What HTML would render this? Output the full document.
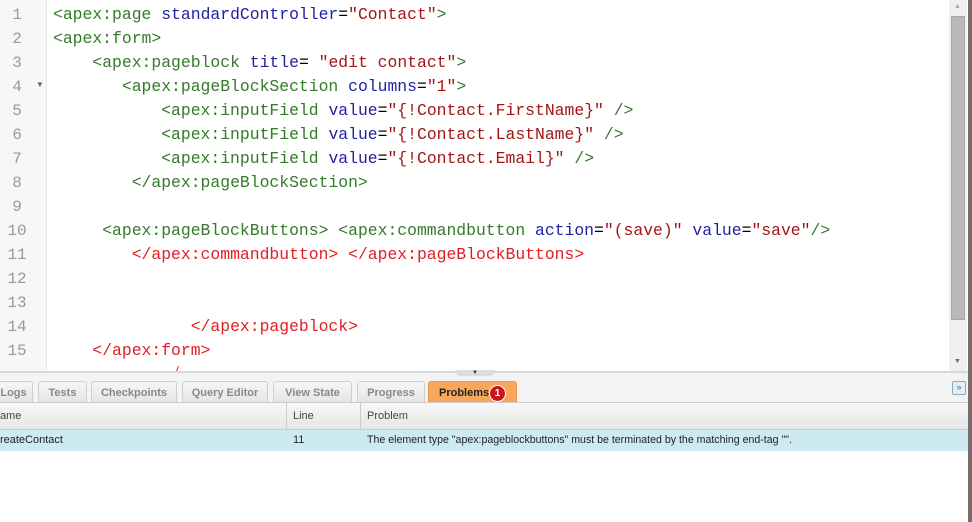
<!DOCTYPE html>
<html><head><meta charset="utf-8"><style>
body{margin:0;width:972px;height:522px;overflow:hidden;background:#fff;position:relative;font-family:"Liberation Sans",sans-serif}
.ed{position:absolute;left:0;top:0;width:968px;height:371px;background:#fff;overflow:hidden}
.gut{position:absolute;left:0;top:0;width:46px;height:371px;background:#f7f7f7;border-right:1px solid #e6e6e6}
.ln{position:absolute;left:0;width:34px;text-align:center;font:16px "Liberation Mono",monospace;color:#999}
.code{position:absolute;left:53px;top:0;font:16.4px "Liberation Mono",monospace;white-space:pre;line-height:24px;color:#000}
.t{color:#347a2a}.a{color:#1f1fa0}.s{color:#a31515}.r{color:#e01e24}
.sb{position:absolute;left:949px;top:0;width:18px;height:371px;background:#f0f0f0}
.thumb{position:absolute;left:2px;top:16px;width:12px;height:302px;background:#b9b9b9;border:1px solid #a8a8a8}
.rb{position:absolute;left:968px;top:0;width:4px;height:522px;background:#7a6c6c}
.tabs{position:absolute;left:0;top:371px;width:968px;height:31px;background:#f3f3f3;border-top:2px solid #d8d8d8;box-sizing:border-box}
.tab{position:absolute;top:8px;height:22px;background:linear-gradient(#f6f6f6,#e4e4e4);border:1px solid #cfcfcf;border-bottom:none;border-radius:3px 3px 0 0;font:bold 11px "Liberation Sans",sans-serif;color:#888;line-height:22px;text-align:center;box-sizing:border-box}
.hd{position:absolute;top:402px;left:0;width:968px;height:28px;background:linear-gradient(#f7f7f7,#e6e6e6);border-top:1px solid #ccc;border-bottom:1px solid #ccc;box-sizing:border-box;font-size:11px;color:#444}
.row{position:absolute;top:430px;left:0;width:968px;height:21px;background:#cdeaf3;font-size:11px;color:#222}
.c{position:absolute;top:0;height:100%;line-height:27px;padding-left:6px;box-sizing:border-box}
.row .c{line-height:21px}
</style></head><body>
<div class="ed">
<div class="gut"></div>
<div class="ln" style="top:6px">1</div><div class="ln" style="top:30px">2</div><div class="ln" style="top:54px">3</div><div class="ln" style="top:78px">4</div><div class="ln" style="top:102px">5</div><div class="ln" style="top:126px">6</div><div class="ln" style="top:150px">7</div><div class="ln" style="top:174px">8</div><div class="ln" style="top:198px">9</div><div class="ln" style="top:222px">10</div><div class="ln" style="top:246px">11</div><div class="ln" style="top:270px">12</div><div class="ln" style="top:294px">13</div><div class="ln" style="top:318px">14</div><div class="ln" style="top:342px">15</div>
<div style="position:absolute;left:36px;top:80px;font-size:8px;color:#666">▼</div>
<div class="code" style="top:3px"><span class="t">&lt;apex:page</span> <span class="a">standardController</span>=<span class="s">"Contact"</span><span class="t">&gt;</span>
<span class="t">&lt;apex:form&gt;</span>
    <span class="t">&lt;apex:pageblock</span> <span class="a">title</span>= <span class="s">"edit contact"</span><span class="t">&gt;</span>
       <span class="t">&lt;apex:pageBlockSection</span> <span class="a">columns</span>=<span class="s">"1"</span><span class="t">&gt;</span>
           <span class="t">&lt;apex:inputField</span> <span class="a">value</span>=<span class="s">"{!Contact.FirstName}"</span> <span class="t">/&gt;</span>
           <span class="t">&lt;apex:inputField</span> <span class="a">value</span>=<span class="s">"{!Contact.LastName}"</span> <span class="t">/&gt;</span>
           <span class="t">&lt;apex:inputField</span> <span class="a">value</span>=<span class="s">"{!Contact.Email}"</span> <span class="t">/&gt;</span>
        <span class="t">&lt;/apex:pageBlockSection&gt;</span>

     <span class="t">&lt;apex:pageBlockButtons&gt;</span> <span class="t">&lt;apex:commandbutton</span> <span class="a">action</span>=<span class="s">"(save)"</span> <span class="a">value</span>=<span class="s">"save"</span><span class="t">/&gt;</span>
        <span class="r">&lt;/apex:commandbutton&gt;</span> <span class="r">&lt;/apex:pageBlockButtons&gt;</span>


              <span class="r">&lt;/apex:pageblock&gt;</span>
    <span class="r">&lt;/apex:form&gt;</span></div>
<div style="position:absolute;left:177px;top:366px;width:1px;height:5px;background:#e01e24;transform:skewX(-20deg)"></div>
<div class="sb"><div style="position:absolute;left:5px;top:3px;font-size:7px;color:#aaa">▲</div><div class="thumb"></div><div style="position:absolute;left:5px;top:358px;font-size:7px;color:#666">▼</div></div>
</div>
<div class="tabs">
<div style="position:absolute;left:455px;top:-3px;width:40px;height:6px;background:#ddd;border-radius:0 0 6px 6px;font-size:6px;text-align:center;color:#333;line-height:6px">▼</div>
<div class="tab" style="left:-6px;width:39px">Logs</div>
<div class="tab" style="left:38px;width:49px">Tests</div>
<div class="tab" style="left:91px;width:86px">Checkpoints</div>
<div class="tab" style="left:182px;width:86px">Query Editor</div>
<div class="tab" style="left:273px;width:79px">View State</div>
<div class="tab" style="left:357px;width:68px">Progress</div>
<div class="tab" style="left:428px;width:89px;background:#f9a65a;border-color:#e39a55;color:#222;text-align:left;padding-left:10px">Problems<span style="position:absolute;left:61px;top:4px;width:15px;height:15px;border-radius:50%;background:#c8141c;color:#fff;font-size:10px;line-height:15px;text-align:center;box-shadow:0 0 0 1px #fff">1</span></div>
<div style="position:absolute;left:952px;top:8px;width:12px;height:12px;border:1px solid #8ab;border-radius:2px;background:#e4eef6;font-size:9px;line-height:11px;text-align:center;color:#36a">»</div>
</div>
<div class="hd"><div class="c" style="left:-14px;width:301px;border-right:1px solid #ccc">Name</div><div class="c" style="left:287px;width:74px;border-right:1px solid #ccc">Line</div><div class="c" style="left:361px">Problem</div></div>
<div class="row"><div class="c" style="left:-14px">CreateContact</div><div class="c" style="left:287px">11</div><div class="c" style="left:361px;font-size:10.6px">The element type "apex:pageblockbuttons" must be terminated by the matching end-tag "".</div></div>
<div class="rb"></div>
</body></html>
